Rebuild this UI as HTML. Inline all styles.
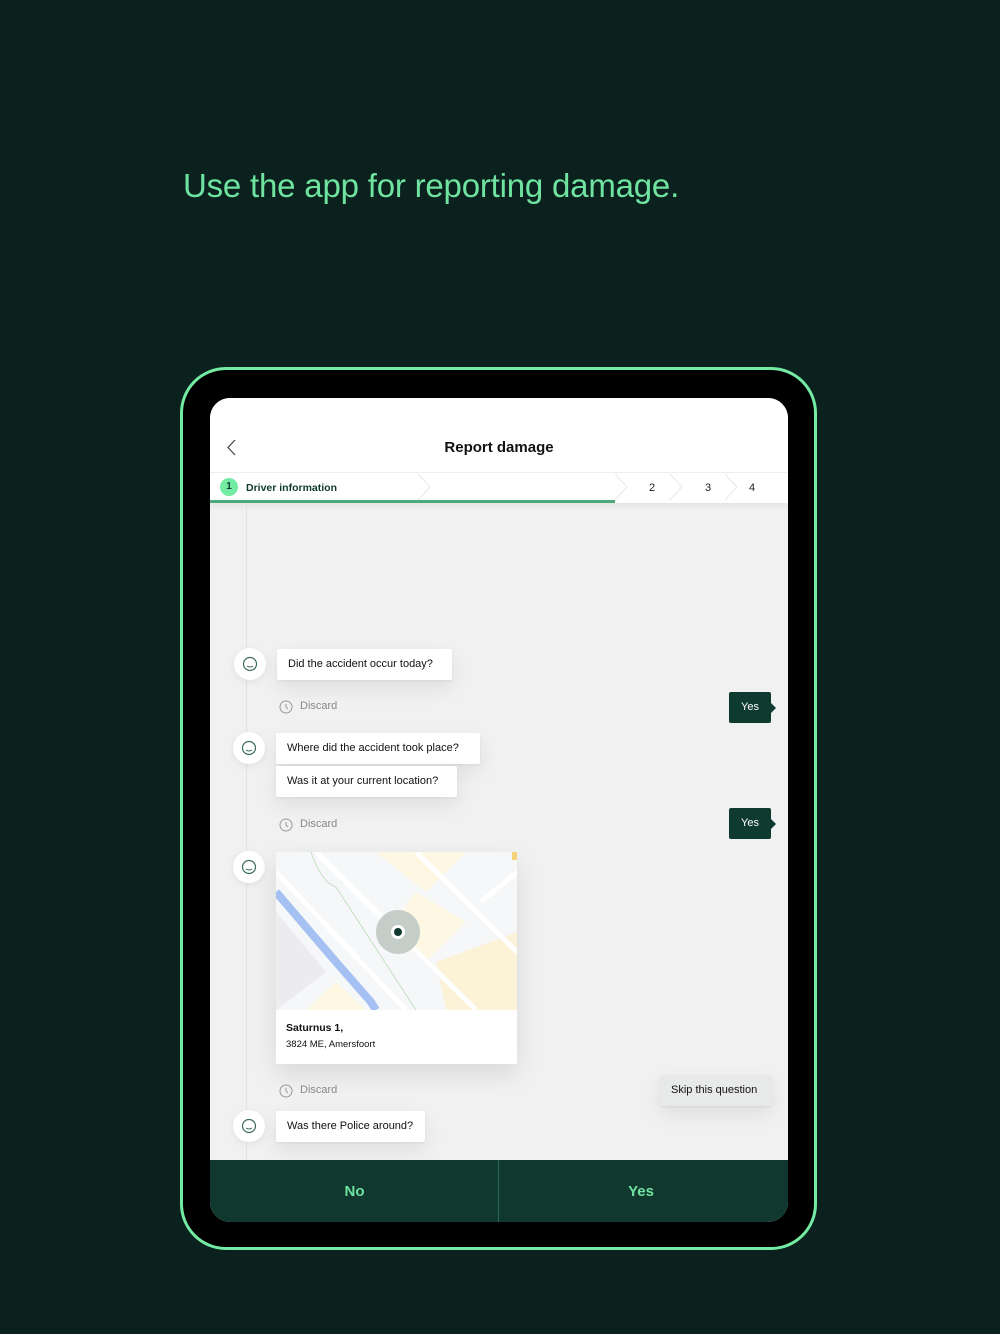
<!DOCTYPE html>
<html><head><meta charset="utf-8"><style>
*{margin:0;padding:0;box-sizing:border-box}
body{width:1000px;height:1334px;background:#0a211d;position:relative;overflow:hidden;font-family:"Liberation Sans",sans-serif}
.a{position:absolute}
.h1{left:183px;top:167px;font-size:33px;color:#6fe3a0;letter-spacing:-0.2px;font-weight:400}
.tab{left:180px;top:367px;width:637px;height:883px;border:3px solid #74eba2;border-radius:46px;background:#000}
.scr{left:210px;top:398px;width:578px;height:824px;border-radius:20px;overflow:hidden;background:#f0f1f0}
.bub{background:#fff;font-size:11px;color:#111;padding:0 11px;height:31px;line-height:31px;box-shadow:0 8px 20px rgba(0,0,0,.08),0 1px 2px rgba(0,0,0,.06);border-radius:2px;white-space:nowrap}
.av{width:32px;height:32px;border-radius:50%;background:#fff;box-shadow:0 2px 8px rgba(0,0,0,.07)}
.av svg{position:absolute;left:8px;top:8px}
.dis{font-size:11px;color:#888}
.dis svg{position:absolute;left:-22px;top:-1px}
.yes{background:#0f3a2f;color:#fff;font-size:11px;width:42px;height:31px;line-height:31px;text-align:center;border-radius:2px}
.yes:after{content:"";position:absolute;right:-5px;top:11px;border:5px solid transparent;border-left-color:#0f3a2f;border-right:0}
</style></head><body>
<div class="a h1">Use the app for reporting damage.</div>
<div class="a tab"></div>
<div class="a scr">
  <div class="a" style="left:0;top:0;width:578px;height:74px;background:#fff"></div>
  <svg class="a" style="left:16px;top:41px" width="12" height="18"><path d="M9 1 L2 8.5 L9 16" fill="none" stroke="#444" stroke-width="1.2"/></svg>
  <div class="a" style="left:0;width:578px;top:41px;text-align:center;font-size:15px;font-weight:700;color:#111">Report damage</div>
  <div class="a" style="left:0;top:74px;width:578px;height:31px;background:#fff;border-top:1px solid #eee;box-shadow:0 3px 6px rgba(0,0,0,.06)"></div>
  <div class="a" style="left:0;top:102px;width:405px;height:3px;background:#4fa87a"></div>
  <div class="a" style="left:10px;top:80px;width:18px;height:18px;border-radius:50%;background:#74eba2;font-size:10px;font-weight:700;text-align:center;line-height:18px;color:#0f3a2f">1</div>
  <div class="a" style="left:36px;top:84px;font-size:10.5px;font-weight:700;color:#0f3a2f">Driver information</div>
  <svg class="a" style="left:0;top:74px" width="578" height="30"><g fill="none" stroke="#e8e8e8" stroke-width="1"><path d="M208 2 L220 15 L208 28"/><path d="M405 2 L417 15 L405 28"/><path d="M460 2 L472 15 L460 28"/><path d="M515 2 L527 15 L515 28"/></g></svg>
  <div class="a" style="left:439px;top:84px;font-size:11px;color:#222">2</div>
  <div class="a" style="left:495px;top:84px;font-size:11px;color:#222">3</div>
  <div class="a" style="left:539px;top:84px;font-size:11px;color:#222">4</div>
  <div class="a" style="left:36px;top:105px;width:1px;height:660px;background:#e2e3e2"></div>

  <div class="a av" style="left:24px;top:250px"><svg width="16" height="16"><circle cx="8" cy="8" r="6.5" fill="none" stroke="#3c6b5c" stroke-width="1.2"/><path d="M5 10 Q8 12 11 10" fill="none" stroke="#3c6b5c"/></svg></div>
  <div class="a bub" style="left:67px;top:251px;width:175px">Did the accident occur today?</div>
  <div class="a dis" style="left:90px;top:302px"><svg width="16" height="16"><circle cx="8" cy="8" r="6" fill="none" stroke="#999"/><path d="M8 5 V8 L10 10" fill="none" stroke="#999"/></svg>Discard</div>
  <div class="a yes" style="left:519px;top:294px">Yes</div>

  <div class="a av" style="left:23px;top:334px"><svg width="16" height="16"><circle cx="8" cy="8" r="6.5" fill="none" stroke="#3c6b5c" stroke-width="1.2"/><path d="M5 10 Q8 12 11 10" fill="none" stroke="#3c6b5c"/></svg></div>
  <div class="a bub" style="left:66px;top:335px;width:204px">Where did the accident took place?</div>
  <div class="a bub" style="left:66px;top:368px;width:181px">Was it at your current location?</div>
  <div class="a dis" style="left:90px;top:420px"><svg width="16" height="16"><circle cx="8" cy="8" r="6" fill="none" stroke="#999"/><path d="M8 5 V8 L10 10" fill="none" stroke="#999"/></svg>Discard</div>
  <div class="a yes" style="left:519px;top:410px">Yes</div>

  <div class="a av" style="left:23px;top:453px"><svg width="16" height="16"><circle cx="8" cy="8" r="6.5" fill="none" stroke="#3c6b5c" stroke-width="1.2"/><path d="M5 10 Q8 12 11 10" fill="none" stroke="#3c6b5c"/></svg></div>
  <div class="a" style="left:66px;top:454px;width:241px;height:212px;background:#fff;box-shadow:0 10px 24px rgba(0,0,0,.1)">
    <svg class="a" style="left:0;top:0" width="241" height="158"><rect width="241" height="158" fill="#f6f7f8"/>
      <path d="M100 0 L150 40 L190 0Z" fill="#fdf7e3"/><path d="M140 40 L190 70 L150 110 L110 80Z" fill="#fdf7e3"/>
      <path d="M160 110 L241 80 L241 158 L170 158Z" fill="#fcf2d8"/><path d="M30 158 L60 130 L90 158Z" fill="#fdf7e3"/>
      <path d="M0 60 L50 120 L0 158Z" fill="#ececef"/>
      <path d="M0 40 L60 110 L95 150 L100 158" fill="none" stroke="#a5c0f2" stroke-width="8"/>
      <path d="M0 20 L130 158 M40 0 L200 158 M140 0 L241 100 M205 50 L241 20" fill="none" stroke="#fff" stroke-width="5"/>
      <path d="M35 0 Q45 30 60 35 L140 158" fill="none" stroke="#b8dcb8" stroke-width=".8"/>
      <rect x="236" y="0" width="5" height="8" fill="#f5d27a"/>
      <circle cx="122" cy="80" r="22" fill="#c5cdc8"/><circle cx="122" cy="80" r="7" fill="#fff"/><circle cx="122" cy="80" r="4" fill="#0f3a2f"/>
    </svg>
    <div class="a" style="left:10px;top:170px;font-size:10.5px;font-weight:700;color:#111">Saturnus 1,</div>
    <div class="a" style="left:10px;top:187px;font-size:9.5px;color:#111">3824 ME, Amersfoort</div>
  </div>
  <div class="a dis" style="left:90px;top:686px"><svg width="16" height="16"><circle cx="8" cy="8" r="6" fill="none" stroke="#999"/><path d="M8 5 V8 L10 10" fill="none" stroke="#999"/></svg>Discard</div>
  <div class="a bub" style="left:450px;top:677px;width:112px;background:#e8e9e9;height:31px">Skip this question</div>

  <div class="a av" style="left:23px;top:712px"><svg width="16" height="16"><circle cx="8" cy="8" r="6.5" fill="none" stroke="#3c6b5c" stroke-width="1.2"/><path d="M5 10 Q8 12 11 10" fill="none" stroke="#3c6b5c"/></svg></div>
  <div class="a bub" style="left:66px;top:713px;width:149px">Was there Police around?</div>

  <div class="a" style="left:0;top:762px;width:578px;height:62px;background:#10382f"></div>
  <div class="a" style="left:288px;top:762px;width:1px;height:62px;background:#2a6a54"></div>
  <div class="a" style="left:0;width:289px;top:785px;text-align:center;font-size:15px;font-weight:700;color:#6fe3a0">No</div>
  <div class="a" style="left:289px;width:284px;top:785px;text-align:center;font-size:15px;font-weight:700;color:#6fe3a0">Yes</div>
</div>
</body></html>
